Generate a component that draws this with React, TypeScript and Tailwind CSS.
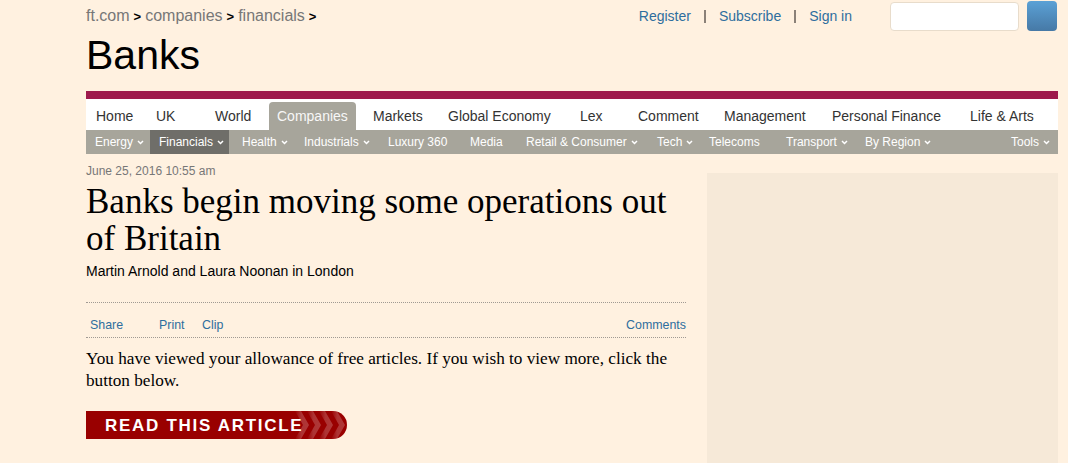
import type { FC } from "react";

const Chevron: FC = () => (
  <svg width="7" height="5" viewBox="0 0 7 5" className="ml-[4px] shrink-0">
    <path d="M1 1l2.5 2.5L6 1" fill="none" stroke="#fff" strokeWidth="1.5" />
  </svg>
);

const navItems = [
  { label: "Home", cls: "w-[60px]" },
  { label: "UK", cls: "w-[59px]" },
  { label: "World", cls: "w-[54px]" },
];

const navItemsAfter = [
  { label: "Markets", cls: "w-[92px] pl-[17px]" },
  { label: "Global Economy", cls: "w-[132px]" },
  { label: "Lex", cls: "w-[58px]" },
  { label: "Comment", cls: "w-[86px]" },
  { label: "Management", cls: "w-[108px]" },
  { label: "Personal Finance", cls: "w-[138px]" },
  { label: "Life & Arts", cls: "flex-1" },
];

const subItems = [
  { label: "Health", cls: "w-[75px] pl-[13px]", chev: true },
  { label: "Industrials", cls: "w-[84px]", chev: true },
  { label: "Luxury 360", cls: "w-[82px]", chev: false },
  { label: "Media", cls: "w-[56px]", chev: false },
  { label: "Retail & Consumer", cls: "w-[131px]", chev: true },
  { label: "Tech", cls: "w-[52px]", chev: true },
  { label: "Telecoms", cls: "w-[77px]", chev: false },
  { label: "Transport", cls: "w-[79px]", chev: true },
  { label: "By Region", cls: "flex-1", chev: true },
];

const App: FC = () => {
  return (
    <div className="flex min-h-screen flex-col bg-[#fff1e0] font-['Liberation_Sans',Arial,sans-serif]">
      <div className="ml-[86px] flex w-[972px] flex-1 flex-col">
        {/* HEADER */}
        <header className="flex h-[91px] justify-between">
          <div className="pt-[6px]">
            <p className="flex items-baseline text-[16px] leading-[20px] text-[#777]">
              <span>ft.com</span>
              <span className="mx-[4px] text-[13px] font-bold text-black">&gt;</span>
              <span>companies</span>
              <span className="mx-[4px] text-[13px] font-bold text-black">&gt;</span>
              <span>financials</span>
              <span className="mx-[4px] text-[13px] font-bold text-black">&gt;</span>
            </p>
            <h1 className="mt-[4px] text-[41px] leading-[48px] text-black">Banks</h1>
          </div>

          <div className="mt-[1px] mr-[1px] flex h-[30px] items-center">
            <a className="text-[14px] text-[#2e6e9e]">Register</a>
            <span className="mx-[13px] inline-block h-[13px] w-[2px] bg-[#8b8178]" />
            <a className="text-[14px] text-[#2e6e9e]">Subscribe</a>
            <span className="mx-[13px] inline-block h-[13px] w-[2px] bg-[#8b8178]" />
            <a className="text-[14px] text-[#2e6e9e]">Sign in</a>
            <input
              className="ml-[38px] h-[29px] w-[129px] rounded-[4px] border border-[#e8dccb] bg-white outline-none"
              aria-label="Search"
            />
            <button className="ml-[8px] h-[30px] w-[30px] rounded-[4px] bg-linear-to-b from-[#5ba1d6] to-[#4679a6]" />
          </div>
        </header>

        {/* NAV */}
        <div className="h-[8px] bg-[#9e1a4c]" />
        <nav className="flex h-[31px] items-end bg-white pl-[10px] text-[14px] text-[#333]">
          {navItems.map((n) => (
            <div key={n.label} className={`flex h-[28px] items-center ${n.cls}`}>
              {n.label}
            </div>
          ))}
          <div className="flex h-[28px] w-[87px] items-center rounded-t-[4px] bg-[#a7a59b] px-[8px] text-[#f7f7f7]">
            Companies
          </div>
          {navItemsAfter.map((n) => (
            <div key={n.label} className={`flex h-[28px] items-center ${n.cls}`}>
              {n.label}
            </div>
          ))}
        </nav>
        <div className="flex h-[24px] items-stretch bg-[#a7a59b] pl-[9px] text-[12px] text-white">
          <div className="flex w-[55px] items-center">
            Energy
            <Chevron />
          </div>
          <div className="flex w-[79px] items-center bg-[#6f6e69] pl-[9px]">
            Financials
            <Chevron />
          </div>
          {subItems.map((s) => (
            <div key={s.label} className={`flex items-center ${s.cls}`}>
              {s.label}
              {s.chev && <Chevron />}
            </div>
          ))}
          <div className="flex items-center pr-[8px]">
            Tools
            <Chevron />
          </div>
        </div>

        {/* MAIN */}
        <main className="flex flex-1">
          <article className="w-[600px] pt-[9px] pb-[24px]">
            <p className="text-[12px] leading-[16px] text-[#777]">June 25, 2016 10:55 am</p>
            <h2 className="mt-[4px] font-['Liberation_Serif',Georgia,serif] text-[35px] leading-[37px] text-black">
              Banks begin moving some operations out of Britain
            </h2>
            <p className="mt-[6px] text-[14px] leading-[16px] text-black">
              Martin Arnold and Laura Noonan in London
            </p>

            <div className="mt-[23px] flex border-y border-dotted border-[#a09a93] pt-[14px] pb-[4px] text-[12.4px] leading-[16px] text-[#2e6e9e]">
              <a className="ml-[4px] w-[69px]">Share</a>
              <a className="w-[43px]">Print</a>
              <a>Clip</a>
              <a className="ml-auto">Comments</a>
            </div>

            <p className="mt-[10px] font-['Liberation_Serif',Georgia,serif] text-[17.2px] leading-[22px] text-black">
              You have viewed your allowance of free articles. If you wish to view more, click the
              button below.
            </p>

            <button className="relative mt-[19px] flex h-[28px] w-[261px] items-center overflow-hidden rounded-r-full bg-[#990000] pt-[2px] pl-[19px] text-[17px] font-bold tracking-[1.7px] text-white">
              <svg
                width="58"
                height="28"
                viewBox="0 0 58 28"
                className="absolute top-0 right-0"
              >
                <defs>
                  <linearGradient id="fade" x1="0" x2="1" y1="0" y2="0">
                    <stop offset="0" stopColor="#fff" stopOpacity="0" />
                    <stop offset="0.45" stopColor="#fff" stopOpacity="0.2" />
                    <stop offset="1" stopColor="#fff" stopOpacity="0.22" />
                  </linearGradient>
                </defs>
                <polygon points="6,0 12,0 20,14 12,28 6,28 14,14" fill="url(#fade)" />
                <polygon points="18,0 24,0 32,14 24,28 18,28 26,14" fill="url(#fade)" />
                <polygon points="30,0 36,0 44,14 36,28 30,28 38,14" fill="url(#fade)" />
                <polygon points="42,0 48,0 56,14 48,28 42,28 50,14" fill="url(#fade)" />
              </svg>
              <span className="relative">READ THIS ARTICLE</span>
            </button>
          </article>

          <aside className="mt-[19px] ml-[21px] flex-1 bg-[#f6e9d8]" />
        </main>
      </div>
    </div>
  );
};

export default App;
